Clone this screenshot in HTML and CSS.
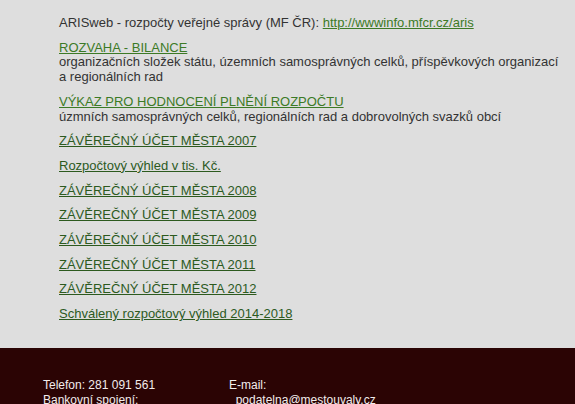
FILE: index.html
```html
<!DOCTYPE html>
<html lang="cs">
<head>
<meta charset="utf-8">
<title>Rozpočet</title>
<link rel="stylesheet" href="styles.css">
</head>
<body>
<main class="content">
  <p>ARISweb - rozpočty veřejné správy (MF ČR): <a class="link" href="#">http://wwwinfo.mfcr.cz/aris</a></p>
  <p><a class="link" href="#">ROZVAHA - BILANCE</a><br>organizačních složek státu, územních samosprávných celků, příspěvkových organizací a regionálních rad</p>
  <p><a class="link" href="#">VÝKAZ PRO HODNOCENÍ PLNĚNÍ ROZPOČTU</a><br>úzmních samosprávných celků, regionálních rad a dobrovolných svazků obcí</p>
  <p><a class="link dark" href="#">ZÁVĚREČNÝ ÚČET MĚSTA 2007</a></p>
  <p><a class="link dark" href="#">Rozpočtový výhled v tis. Kč.</a></p>
  <p><a class="link dark" href="#">ZÁVĚREČNÝ ÚČET MĚSTA 2008</a></p>
  <p><a class="link dark" href="#">ZÁVĚREČNÝ ÚČET MĚSTA 2009</a></p>
  <p><a class="link dark" href="#">ZÁVĚREČNÝ ÚČET MĚSTA 2010</a></p>
  <p><a class="link dark" href="#">ZÁVĚREČNÝ ÚČET MĚSTA 2011</a></p>
  <p><a class="link dark" href="#">ZÁVĚREČNÝ ÚČET MĚSTA 2012</a></p>
  <p><a class="link dark" href="#">Schválený rozpočtový výhled 2014-2018</a></p>
</main>
<footer class="footer">
  <div class="col col-left">Telefon: 281 091 561<br>Bankovní spojení:</div>
  <div class="col col-right">E-mail:<br>&nbsp;&nbsp;podatelna@mestouvaly.cz</div>
</footer>
</body>
</html>
```
FILE: styles.css
```css
html, body {
  margin: 0;
  padding: 0;
}
body {
  background: #dedede;
  font-family: "Liberation Sans", Arial, sans-serif;
  font-size: 13px;
  color: #333333;
  line-height: 14.7px;
}
.content {
  padding: 6px 12px 16px 59px;
  height: 326px;
  overflow: hidden;
}
.content p {
  margin: 10px 0;
}
.link {
  color: #3c7a26;
  text-decoration: underline;
}
.link.dark {
  color: #2c5a1e;
}
.footer {
  background: #2b0404;
  color: #f2ecec;
  font-size: 12px;
  line-height: 15px;
  display: flex;
  padding: 30px 0 0 43px;
  height: 60px;
}
.col-left {
  width: 186px;
}
```
